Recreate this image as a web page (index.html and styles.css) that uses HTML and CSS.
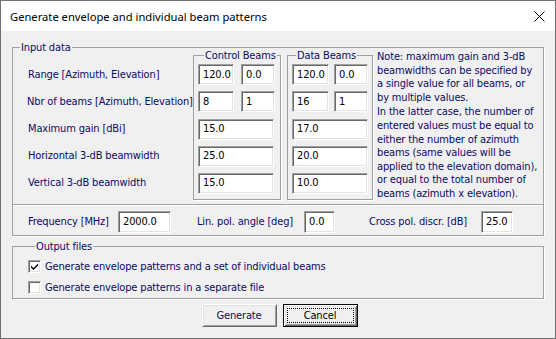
FILE: index.html
```html
<!DOCTYPE html>
<html lang="en">
<head>
    <meta charset="UTF-8">
    <title>Generate envelope and individual beam patterns</title>
    <link rel="stylesheet" href="styles.css">
</head>
<body>
    <div class="window">
        <div class="titlebar">
            <span class="title">Generate envelope and individual beam patterns</span>
            <svg class="close" width="11" height="11" viewBox="0 0 11 11">
                <path d="M0.5 0.5 L10.5 10.5 M10.5 0.5 L0.5 10.5" stroke="#000" stroke-width="1" fill="none"/>
            </svg>
        </div>

        <div class="client">
            <fieldset class="group input-group">
                <legend>Input data</legend>
                <div class="upper">
                    <div class="labels">
                        <div class="row">Range [Azimuth, Elevation]</div>
                        <div class="row nbr">Nbr of beams [Azimuth, Elevation]</div>
                        <div class="row">Maximum gain [dBi]</div>
                        <div class="row">Horizontal 3-dB beamwidth</div>
                        <div class="row">Vertical 3-dB beamwidth</div>
                    </div>

                    <fieldset class="group beams control">
                        <legend>Control Beams</legend>
                        <div class="row pair">
                            <input class="edit first" type="text" value="120.0">
                            <input class="edit second" type="text" value="0.0">
                        </div>
                        <div class="row pair">
                            <input class="edit first" type="text" value="8">
                            <input class="edit second" type="text" value="1">
                        </div>
                        <div class="row"><input class="edit wide" type="text" value="15.0"></div>
                        <div class="row"><input class="edit wide" type="text" value="25.0"></div>
                        <div class="row"><input class="edit wide" type="text" value="15.0"></div>
                    </fieldset>

                    <fieldset class="group beams data">
                        <legend>Data Beams</legend>
                        <div class="row pair">
                            <input class="edit first" type="text" value="120.0">
                            <input class="edit second" type="text" value="0.0">
                        </div>
                        <div class="row pair">
                            <input class="edit first" type="text" value="16">
                            <input class="edit second" type="text" value="1">
                        </div>
                        <div class="row"><input class="edit wide" type="text" value="17.0"></div>
                        <div class="row"><input class="edit wide" type="text" value="20.0"></div>
                        <div class="row"><input class="edit wide" type="text" value="10.0"></div>
                    </fieldset>

                    <div class="note">
                        <p>Note: maximum gain and 3-dB<br>beamwidths can be specified by<br>a single value for all beams, or<br>by multiple values.</p>
                        <p>In the latter case, the number of<br>entered values must be equal to<br>either the number of azimuth<br>beams (same values will be<br>applied to the elevation domain),<br>or equal to the total number of<br>beams (azimuth x elevation).</p>
                    </div>
                </div>

                <div class="freq-row">
                    <span class="freq-label freq">Frequency [MHz]</span>
                    <input class="edit freq-edit" type="text" value="2000.0">
                    <span class="freq-label angle">Lin. pol. angle [deg]</span>
                    <input class="edit angle-edit" type="text" value="0.0">
                    <span class="freq-label cross">Cross pol. discr. [dB]</span>
                    <input class="edit cross-edit" type="text" value="25.0">
                </div>
            </fieldset>

            <fieldset class="group output-group">
                <legend>Output files</legend>
                <label class="check-row">
                    <span class="checkbox">
                        <svg width="9" height="9" viewBox="0 0 9 9">
                            <path d="M1 3.5 L3.5 6 L8 1.5 L8 3.5 L3.5 8 L1 5.5 Z" fill="#000"/>
                        </svg>
                    </span>
                    Generate envelope patterns and a set of individual beams
                </label>
                <label class="check-row">
                    <span class="checkbox"></span>
                    Generate envelope patterns in a separate file
                </label>
            </fieldset>

            <div class="buttons">
                <button class="btn">Generate</button>
                <button class="btn default"><span class="focus">Cancel</span></button>
            </div>
        </div>
    </div>
</body>
</html>
```

FILE: styles.css
```css
* {
    box-sizing: border-box;
}
body {
    margin: 0;
    font-family: "DejaVu Sans Condensed", "DejaVu Sans", sans-serif;
    font-stretch: condensed;
    font-size: 11px;
    letter-spacing: -0.15px;
    color: #0b0b66;
    background-color: #fff;
}
.window {
    width: 556px;
    height: 339px;
    border: 1px solid #707070;
    background-color: #f0f0f0;
}
.titlebar {
    height: 30px;
    background-color: #fff;
    display: flex;
    align-items: center;
    justify-content: space-between;
    padding: 0 10px 0 9px;
}
.title {
    font-family: "Noto Sans", sans-serif;
    font-stretch: normal;
    font-size: 11.2px;
    letter-spacing: 0;
    color: #000;
}
.client {
    padding: 10px 4px 0 11px;
}

/* group boxes */
.group {
    margin: 0;
    padding: 0;
    min-inline-size: 0;
    border: 1px solid #a0a0a0;
    box-shadow: 1px 1px 0 #fff;
}
.group legend {
    padding: 0 1px;
    line-height: 13px;
    white-space: nowrap;
}
.input-group {
    width: 532px;
}
.input-group > legend {
    margin-left: 7px;
}
.upper {
    display: flex;
    align-items: flex-start;
    height: 151px;
    margin-top: -5px;
}
.labels {
    width: 180px;
    padding: 15px 0 0 15px;
}
.row {
    height: 21px;
    line-height: 21px;
    margin-top: 6px;
    white-space: nowrap;
}
.row:first-child,
legend + .row {
    margin-top: 0;
}
.labels .nbr {
    margin-left: -1px;
}
.beams {
    padding: 2px 5px 6px 4px;
}
.control {
    width: 88px;
}
.control legend {
    margin-left: 6px;
}
.data {
    width: 86px;
    margin-left: 6px;
    padding-right: 4px;
}
.data legend {
    margin-left: 4px;
}
.pair {
    display: flex;
    justify-content: space-between;
}

/* edit boxes */
.edit {
    height: 21px;
    margin: 0;
    padding: 0 0 1px 4px;
    font: inherit;
    letter-spacing: inherit;
    color: #000;
    background-color: #fff;
    border-top: 1px solid #a0a0a0;
    border-left: 1px solid #a0a0a0;
    border-bottom: 1px solid #fff;
    border-right: 1px solid #fff;
    box-shadow: inset 1px 1px 0 #696969, inset -1px -1px 0 #e3e3e3;
    outline: none;
}
.control .first { width: 36px; }
.control .second { width: 34px; }
.data .first { width: 37px; }
.data .second { width: 34px; }
.wide { width: 76px; }

.note {
    margin-left: 4px;
    padding-top: 1px;
    line-height: 13.6px;
    white-space: nowrap;
}
.note p {
    margin: 0 0 1px 0;
}

/* frequency row */
.freq-row {
    display: flex;
    align-items: center;
    margin-top: 4px;
    padding: 6px 0 2px 15px;
    border-top: 1px solid #a0a0a0;
    box-shadow: inset 0 1px 0 #fff;
}
.freq-label {
    line-height: 22px;
    white-space: nowrap;
}
.freq { width: 90px; }
.angle { width: 133px; padding-left: 26px; }
.cross { width: 146px; padding-left: 34px; }
.freq-row .edit { height: 22px; }
.freq-edit { width: 53px; }
.angle-edit { width: 31px; }
.cross-edit { width: 32px; }

/* output files */
.output-group {
    width: 532px;
    margin-top: 4px;
    padding: 3px 0 1px 15px;
}
.output-group legend {
    margin-left: 7px;
}
.check-row {
    display: flex;
    align-items: center;
    height: 20px;
    white-space: nowrap;
}
.check-row + .check-row {
    margin-top: 1px;
}
.checkbox {
    width: 13px;
    height: 13px;
    margin-right: 4px;
    display: flex;
    align-items: center;
    justify-content: center;
    background-color: #fff;
    border-top: 1px solid #a0a0a0;
    border-left: 1px solid #a0a0a0;
    border-bottom: 1px solid #fff;
    border-right: 1px solid #fff;
    box-shadow: inset 1px 1px 0 #696969, inset -1px -1px 0 #e3e3e3;
}

/* buttons */
.buttons {
    display: flex;
    justify-content: center;
    gap: 6px;
    margin-top: 5px;
    padding-right: 4px;
}
.btn {
    width: 75px;
    height: 23px;
    margin: 0;
    padding: 0;
    font: inherit;
    letter-spacing: inherit;
    color: #0b0b66;
    background-color: #f0f0f0;
    border-top: 1px solid #fff;
    border-left: 1px solid #fff;
    border-bottom: 1px solid #696969;
    border-right: 1px solid #696969;
    box-shadow: inset 1px 1px 0 #e3e3e3, inset -1px -1px 0 #a0a0a0;
}
.btn.default {
    color: #000;
    border: 1px solid #000;
    box-shadow: inset 1px 1px 0 #fff, inset -1px -1px 0 #696969, inset 2px 2px 0 #e3e3e3, inset -2px -2px 0 #a0a0a0;
    padding: 3px;
}
.focus {
    display: block;
    height: 100%;
    line-height: 13px;
    border: 1px dotted #000;
}
```
